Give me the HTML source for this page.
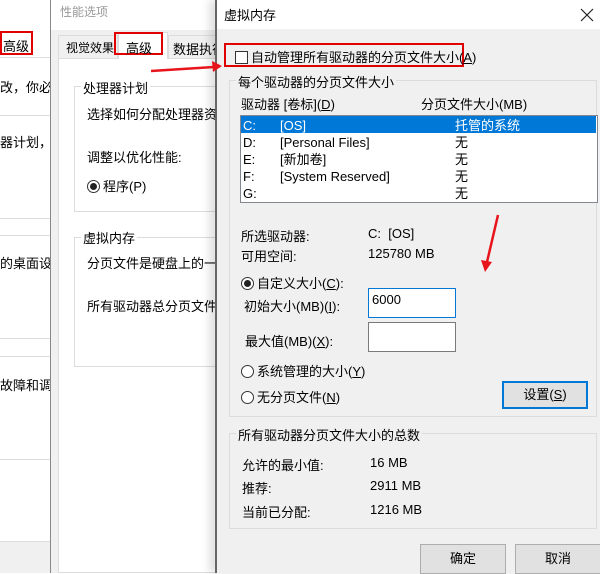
<!DOCTYPE html><html><head><meta charset="utf-8"><style>
*{margin:0;padding:0;box-sizing:border-box}
body{width:600px;height:573px;overflow:hidden;position:relative;background:#fff;font-family:"Liberation Sans","Noto Sans CJK SC",sans-serif;font-size:12px;color:#000}
.a{position:absolute;white-space:nowrap}
.hl{position:absolute;height:1px;background:#dcdcdc}
.grp{position:absolute;border:1px solid #dcdcdc}
.rb{display:inline-block;width:13px;height:13px;border:1px solid #333;border-radius:50%;vertical-align:-2px;margin-right:3px;position:relative;background:#fff}
.rb.on::after{content:"";position:absolute;left:2px;top:2px;width:7px;height:7px;border-radius:50%;background:#222}
.btn{position:absolute;background:#e1e1e1;border:1px solid #adadad;text-align:center}
u{text-decoration:underline}
</style></head><body>
<div class="a" style="left:0;top:0;width:51px;height:573px;background:#fff"></div>
<div class="a" style="left:0;top:31px;width:33px;height:24px;border:2px solid #e00000"></div>
<div class="a" style="left:3px;top:36px;font-size:13px">高级</div>
<div class="hl" style="left:0;top:57px;width:51px;background:#ddd"></div>
<div class="a" style="left:0;top:77px;font-size:13px">改，你必须</div>
<div class="hl" style="left:0;top:115px;width:51px"></div>
<div class="a" style="left:0;top:132px;font-size:13px">器计划，P</div>
<div class="hl" style="left:0;top:218px;width:51px"></div>
<div class="hl" style="left:0;top:235px;width:51px"></div>
<div class="a" style="left:0;top:253px;font-size:13px">的桌面设置</div>
<div class="hl" style="left:0;top:338px;width:51px"></div>
<div class="hl" style="left:0;top:356px;width:51px"></div>
<div class="a" style="left:0;top:375px;font-size:13px">故障和调试</div>
<div class="hl" style="left:0;top:459px;width:51px"></div>
<div class="a" style="left:0;top:541px;width:51px;height:32px;background:#f0f0f0;border-top:1px solid #dcdcdc"></div>
<div class="a" style="left:50px;top:0;width:167px;height:573px;background:#f0f0f0;border-left:1px solid #888"></div>
<div class="a" style="left:51px;top:0;width:166px;height:30px;background:#fff"></div>
<div class="a" style="left:60px;top:3px;color:#999;font-size:12px">性能选项</div>
<div class="a" style="left:58px;top:58px;width:160px;height:515px;background:#fff;border:1px solid #dcdcdc"></div>
<div class="a" style="left:58px;top:35px;width:60px;height:24px;background:#f0f0f0;border:1px solid #dcdcdc"></div>
<div class="a" style="left:66px;top:39px;font-size:12px">视觉效果</div>
<div class="a" style="left:118px;top:32px;width:50px;height:27px;background:#fff;border:1px solid #dcdcdc;border-bottom:none"></div>
<div class="a" style="left:114px;top:32px;width:49px;height:23px;border:2px solid #e00000"></div>
<div class="a" style="left:126px;top:38px;font-size:13px">高级</div>
<div class="a" style="left:168px;top:35px;width:50px;height:24px;background:#f0f0f0;border:1px solid #dcdcdc"></div>
<div class="a" style="left:173px;top:39px;font-size:13px">数据执行</div>
<div class="grp" style="left:74px;top:86px;width:150px;height:126px"></div>
<div class="a" style="left:81px;top:78px;background:#fff;padding:0 2px;font-size:13px">处理器计划</div>
<div class="a" style="left:87px;top:104px;font-size:13px">选择如何分配处理器资源</div>
<div class="a" style="left:87px;top:147px;font-size:13px">调整以优化性能:</div>
<div class="a" style="left:87px;top:176px;font-size:13px"><span class="rb on"></span>程序(P)</div>
<div class="grp" style="left:74px;top:237px;width:150px;height:130px"></div>
<div class="a" style="left:81px;top:228px;background:#fff;padding:0 2px;font-size:13px">虚拟内存</div>
<div class="a" style="left:87px;top:253px;font-size:13px">分页文件是硬盘上的一块</div>
<div class="a" style="left:87px;top:296px;font-size:13px">所有驱动器总分页文件大小</div>
<div class="a" style="left:215px;top:0;width:385px;height:573px;background:#f0f0f0;border-left:2px solid #666;box-shadow:-6px 0 8px rgba(0,0,0,.12)"></div>
<div class="a" style="left:217px;top:0;width:383px;height:29px;background:#fff"></div>
<div class="a" style="left:224px;top:5px;font-size:13px">虚拟内存</div>
<svg class="a" style="left:580px;top:8px" width="14" height="14"><path d="M1 1L13 13M13 1L1 13" stroke="#222" stroke-width="1.2"/></svg>
<div class="a" style="left:224px;top:43px;width:240px;height:24px;border:2px solid #e00000"></div>
<div class="a" style="left:235px;top:47px;font-size:13px"><span style="display:inline-block;width:13px;height:13px;border:1px solid #333;background:#fff;vertical-align:-2px;margin-right:3px"></span>自动管理所有驱动器的分页文件大小(<u>A</u>)</div>
<div class="grp" style="left:229px;top:80px;width:368px;height:337px"></div>
<div class="a" style="left:236px;top:72px;background:#f0f0f0;padding:0 2px;font-size:13px">每个驱动器的分页文件大小</div>
<div class="a" style="left:241px;top:94px;font-size:13px">驱动器 [卷标](<u>D</u>)</div>
<div class="a" style="left:421px;top:94px;font-size:13px">分页文件大小(MB)</div>
<div class="a" style="left:240px;top:115px;width:358px;height:88px;background:#fff;border:1px solid #828790"></div>
<div class="a" style="left:241px;top:116px;width:355px;height:17px;background:#0078d7"></div>
<div class="a" style="left:243px;top:117px;font-size:13px;line-height:17px;color:#fff">C:</div><div class="a" style="left:280px;top:117px;font-size:13px;line-height:17px;color:#fff">[OS]</div><div class="a" style="left:455px;top:117px;font-size:13px;line-height:17px;color:#fff">托管的系统</div>
<div class="a" style="left:243px;top:134px;font-size:13px;line-height:17px">D:</div><div class="a" style="left:280px;top:134px;font-size:13px;line-height:17px">[Personal Files]</div><div class="a" style="left:455px;top:134px;font-size:13px;line-height:17px">无</div>
<div class="a" style="left:243px;top:151px;font-size:13px;line-height:17px">E:</div><div class="a" style="left:280px;top:151px;font-size:13px;line-height:17px">[新加卷]</div><div class="a" style="left:455px;top:151px;font-size:13px;line-height:17px">无</div>
<div class="a" style="left:243px;top:168px;font-size:13px;line-height:17px">F:</div><div class="a" style="left:280px;top:168px;font-size:13px;line-height:17px">[System Reserved]</div><div class="a" style="left:455px;top:168px;font-size:13px;line-height:17px">无</div>
<div class="a" style="left:243px;top:185px;font-size:13px;line-height:17px">G:</div><div class="a" style="left:455px;top:185px;font-size:13px;line-height:17px">无</div>
<div class="a" style="left:241px;top:226px;font-size:13px">所选驱动器:</div><div class="a" style="left:368px;top:226px;font-size:13px">C:&nbsp; [OS]</div>
<div class="a" style="left:241px;top:246px;font-size:13px">可用空间:</div><div class="a" style="left:368px;top:246px;font-size:13px">125780 MB</div>
<div class="a" style="left:241px;top:273px;font-size:13px"><span class="rb on"></span>自定义大小(<u>C</u>):</div>
<div class="a" style="left:244px;top:296px;font-size:13px">初始大小(MB)(<u>I</u>):</div>
<div class="a" style="left:368px;top:288px;width:88px;height:30px;background:#fff;border:1px solid #0078d7;padding:3px 3px;font-size:13px">6000</div>
<div class="a" style="left:245px;top:331px;font-size:13px">最大值(MB)(<u>X</u>):</div>
<div class="a" style="left:368px;top:322px;width:88px;height:30px;background:#fff;border:1px solid #7a7a7a"></div>
<div class="a" style="left:241px;top:361px;font-size:13px"><span class="rb"></span>系统管理的大小(<u>Y</u>)</div>
<div class="a" style="left:241px;top:387px;font-size:13px"><span class="rb"></span>无分页文件(<u>N</u>)</div>
<div class="btn" style="left:502px;top:381px;width:86px;height:28px;border:2px solid #0078d7;line-height:24px;font-size:13px">设置(<u>S</u>)</div>
<div class="grp" style="left:229px;top:433px;width:368px;height:96px"></div>
<div class="a" style="left:236px;top:425px;background:#f0f0f0;padding:0 2px;font-size:13px">所有驱动器分页文件大小的总数</div>
<div class="a" style="left:242px;top:455px;font-size:13px">允许的最小值:</div><div class="a" style="left:370px;top:455px;font-size:13px">16 MB</div>
<div class="a" style="left:242px;top:478px;font-size:13px">推荐:</div><div class="a" style="left:370px;top:478px;font-size:13px">2911 MB</div>
<div class="a" style="left:242px;top:502px;font-size:13px">当前已分配:</div><div class="a" style="left:370px;top:502px;font-size:13px">1216 MB</div>
<div class="btn" style="left:420px;top:544px;width:86px;height:30px;line-height:27px;font-size:13px">确定</div>
<div class="btn" style="left:515px;top:544px;width:86px;height:30px;line-height:27px;font-size:13px">取消</div>
<svg class="a" style="left:0;top:0" width="600" height="573"><g stroke="#e8141b" stroke-width="2.5" fill="#e8141b">
<line x1="151" y1="71" x2="214" y2="67"/><polygon points="222,66 212,61 213,72" stroke="none"/>
<line x1="498" y1="215" x2="487" y2="262"/><polygon points="485,272 481,260 492,262" stroke="none"/></g></svg>
</body></html>
